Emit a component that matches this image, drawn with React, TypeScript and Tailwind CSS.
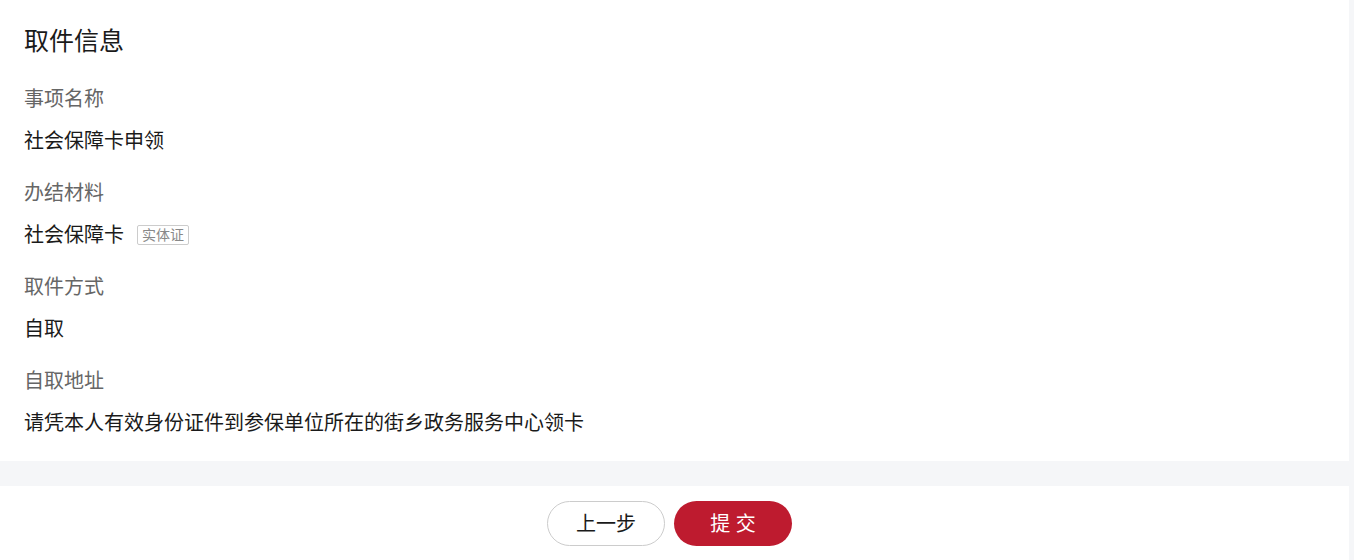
const fields = [
  { label: "事项名称", value: "社会保障卡申领" },
  { label: "办结材料", value: "社会保障卡", tag: "实体证" },
  { label: "取件方式", value: "自取" },
  { label: "自取地址", value: "请凭本人有效身份证件到参保单位所在的街乡政务服务中心领卡" },
];

export default function App() {
  return (
    <div
      className="w-[1354px] h-[560px] bg-[#f5f6f8] overflow-hidden"
      style={{ fontFamily: '"Liberation Sans", "Noto Sans CJK SC", sans-serif' }}
    >
      <div className="w-[1349px]">
        {/* 取件信息 */}
        <section className="bg-white px-6 pt-6 pb-[23px]">
          <h2 className="text-[25px] leading-[34px] text-[#1a1a1a]">取件信息</h2>

          <div className="mt-[26px] flex flex-col gap-[22px]">
            {fields.map(({ label, value, tag }) => (
              <div key={label}>
                <div className="text-[20px] leading-[30px] text-[#666]">{label}</div>
                <div className="mt-[12px] flex items-center text-[20px] leading-[30px] text-[#1a1a1a]">
                  {value}
                  {tag && (
                    <span className="ml-[13px] h-[20px] px-[4px] border border-[#ccc] rounded-[2px] text-[14px] leading-[18px] text-[#888]">
                      {tag}
                    </span>
                  )}
                </div>
              </div>
            ))}
          </div>
        </section>

        {/* 底部按钮 */}
        <div className="mt-[25px] bg-white h-[74px] pt-[15px] flex justify-center items-start">
          <button className="w-[118px] h-[45px] mr-[9px] rounded-full border border-[#ccc] bg-white text-[20px] text-[#1a1a1a]">
            上一步
          </button>
          <button className="w-[118px] h-[45px] mr-[10px] rounded-full bg-[#be1b2f] text-[20px] text-white">
            提 交
          </button>
        </div>
      </div>
    </div>
  );
}
